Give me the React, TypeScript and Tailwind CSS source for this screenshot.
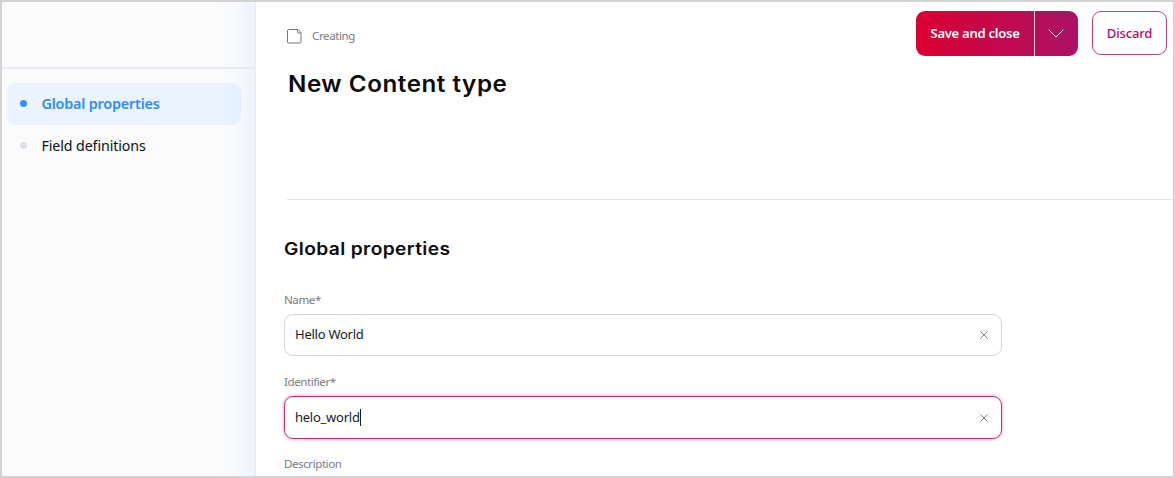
import React from "react";

function ClearIcon() {
  return (
    <svg width="8" height="8" viewBox="0 0 8 8" fill="none" stroke="#5c5f6b" strokeWidth="0.8" strokeLinecap="round">
      <path d="M0.7 0.7 7.3 7.3M7.3 0.7 0.7 7.3" />
    </svg>
  );
}

function NavItem({ label, active }: { label: string; active?: boolean }) {
  return (
    <li
      className={
        active
          ? "flex h-[42px] items-center rounded-[9px] bg-[#ebf3ff] bg-[linear-gradient(to_right,transparent_209px,rgba(65,145,255,0.05)_234px)] pl-[13px] text-[14.4px] font-semibold tracking-[-0.19px] text-[#2e8dfc]"
          : "flex h-[42px] items-center rounded-[9px] pl-[13px] text-[14.2px] tracking-[-0.08px] text-[#0c1016]"
      }
    >
      <span className={active ? "-mt-px size-[7px] rounded-full bg-[#3a8dff]" : "-mt-px size-[7px] rounded-full bg-[#e0e0e8]"} />
      <span className="ml-[14.4px] pt-px whitespace-nowrap">{label}</span>
    </li>
  );
}

function Field({ label, value, focused }: { label: string; value: string; focused?: boolean }) {
  return (
    <div className="h-[82px]">
      <div className="h-[22px] text-[11.6px] leading-[15px] tracking-[-0.45px] text-[#7b7c86]">{label}</div>
      <div
        className={
          focused
            ? "flex h-[43px] w-[718px] items-center rounded-[9px] border border-[#b8337c] pr-[13px] pl-[10px] shadow-[0_0_3px_1px_rgba(219,0,120,0.27)]"
            : "flex h-[42px] w-[718px] items-center rounded-[9px] border border-[#d5d5d8] pr-[13px] pl-[10px]"
        }
      >
        <span className="text-[13px] tracking-[-0.25px] text-[#131c26]">{value}</span>
        {focused && <span className="h-[17px] w-px bg-[#131c26]" />}
        <span className="ml-auto">
          <ClearIcon />
        </span>
      </div>
    </div>
  );
}

export default function App() {
  return (
    <div className="flex h-[478px] w-[1175px] overflow-hidden border-2 border-[#d3d3d3] bg-white font-['Noto_Sans',sans-serif]">
      <aside className="w-[254px] shrink-0 border-r border-[#e9ebf4] bg-[#fbfbfb] bg-[linear-gradient(to_right,transparent_215px,rgba(65,145,255,0.02)_232px,rgba(65,145,255,0.07)_253px)]">
        <div className="h-[67px] border-b-2 border-[#e8e9f1]" />
        <ul className="pt-[13.6px] pr-[14px] pl-[5px]">
          <NavItem label="Global properties" active />
          <NavItem label="Field definitions" />
        </ul>
      </aside>
      <main className="min-w-0 flex-1">
        <header className="ml-[31px] flex h-[198px] justify-between border-b border-[#e2e2e8] pr-[6px]">
          <div>
            <div className="mt-[25px] flex h-[18px] items-center gap-[10px] text-[11.6px] tracking-[-0.42px] text-[#7b7c86]">
              <svg className="mt-px" width="15" height="15" viewBox="0 0 15 15" fill="none" stroke="#777881" strokeWidth="1" strokeLinejoin="round">
                <path d="M1.5 .5h9.5l3 3v9.5a1 1 0 0 1-1 1H1.5a1 1 0 0 1-1-1v-11.5a1 1 0 0 1 1-1Z" />
                <path d="M10.5 .5v3a.5.5 0 0 0 .5.5h3" />
              </svg>
              <span className="-mt-px">Creating</span>
            </div>
            <h1 className="mt-[23px] ml-[0.5px] w-fit origin-left scale-x-[1.08] font-['Inter','Noto_Sans',sans-serif] text-[22.4px] leading-8 font-semibold tracking-[0.5px] whitespace-nowrap text-[#0b0b0d]">
              New Content type
            </h1>
          </div>
          <div className="mt-[9px] flex h-[45px] items-start">
            <div className="flex h-[45px] w-[162px] overflow-hidden rounded-[9px] bg-[linear-gradient(to_right,#db0032,#ab1167)] text-white">
              <button className="w-[118px] text-[13px] font-semibold tracking-[-0.25px] whitespace-nowrap">Save and close</button>
              <button className="flex flex-1 items-center justify-center border-l border-[#f4cfdd] pr-[2px]">
                <svg width="16" height="9" viewBox="0 0 16 9" fill="none" stroke="currentColor" strokeWidth="1" strokeLinecap="round" strokeLinejoin="round">
                  <path d="M1 1 8 8 15 1" />
                </svg>
              </button>
            </div>
            <button className="ml-[14px] h-[44px] w-[75px] rounded-[9px] border border-[#b64584] pt-px text-[13px] font-medium tracking-[-0.15px] text-[#ae1164]">
              Discard
            </button>
          </div>
        </header>
        <section className="pt-[35px] pl-[28px]">
          <h2 className="w-fit origin-left scale-x-[1.09] font-['Inter','Noto_Sans',sans-serif] text-[17.6px] leading-[28px] font-semibold tracking-[0.35px] text-[#0b0b0d]">
            Global properties
          </h2>
          <div className="mt-[29px]">
            <Field label="Name*" value="Hello World" />
            <Field label="Identifier*" value="helo_world" focused />
            <div className="text-[11.6px] leading-[15px] tracking-[-0.45px] text-[#7b7c86]">Description</div>
          </div>
        </section>
      </main>
    </div>
  );
}
